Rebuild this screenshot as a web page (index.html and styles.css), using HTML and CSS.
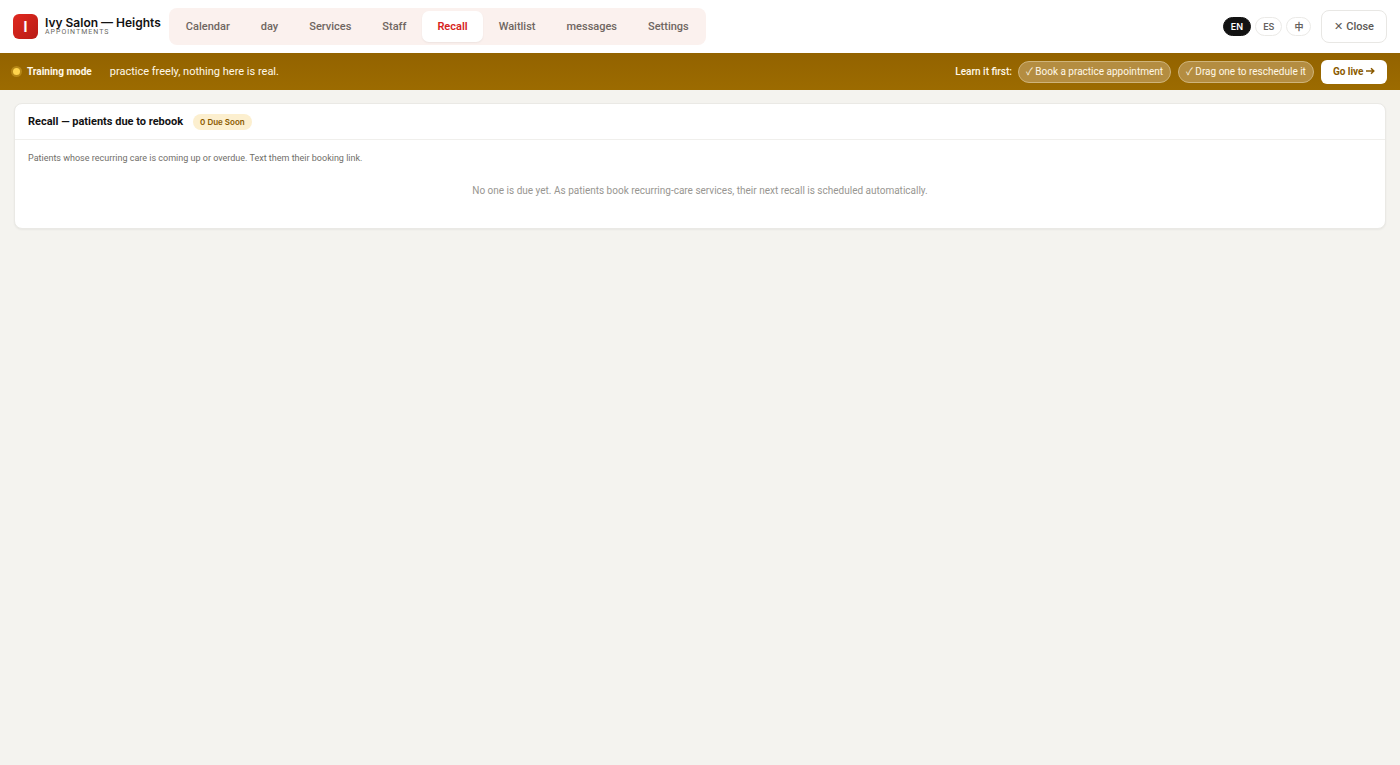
FILE: index.html
```html
<!DOCTYPE html>
<html lang="en">
<head>
  <meta charset="UTF-8">
  <meta name="viewport" content="width=device-width, initial-scale=1.0">
  <title>Ivy Salon — Heights</title>
  <link rel="stylesheet" href="styles.css">
</head>
<body>
  <header class="topbar">
    <div class="logo">I</div>
    <div class="brand">
      <div class="brand-name">Ivy Salon — Heights</div>
      <div class="brand-sub">APPOINTMENTS</div>
    </div>
    <nav class="tabs">
      <button class="tab">Calendar</button>
      <button class="tab">day</button>
      <button class="tab">Services</button>
      <button class="tab">Staff</button>
      <button class="tab active">Recall</button>
      <button class="tab">Waitlist</button>
      <button class="tab">messages</button>
      <button class="tab">Settings</button>
    </nav>
    <div class="langs">
      <button class="lang active">EN</button>
      <button class="lang">ES</button>
      <button class="lang">中</button>
    </div>
    <button class="close">✕ Close</button>
  </header>

  <div class="training">
    <span class="dot"></span>
    <b class="training-mode">Training mode</b>
    <span class="training-text">practice freely, nothing here is real.</span>
    <span class="learn">Learn it first:</span>
    <span class="step">✓ Book a practice appointment</span>
    <span class="step">✓ Drag one to reschedule it</span>
    <button class="golive">Go live <svg width="9" height="8" viewBox="0 0 9 8" aria-hidden="true"><path d="M0 4h7.5M5 1.2L7.8 4 5 6.8" fill="none" stroke="currentColor" stroke-width="1.5"/></svg></button>
  </div>

  <main>
    <section class="card">
      <div class="card-head">
        <h1>Recall — patients due to rebook</h1>
        <span class="badge">0 Due Soon</span>
      </div>
      <div class="card-body">
        <p class="hint">Patients whose recurring care is coming up or overdue. Text them their booking link.</p>
        <p class="empty">No one is due yet. As patients book recurring-care services, their next recall is scheduled automatically.</p>
      </div>
    </section>
  </main>
</body>
</html>
```

FILE: styles.css
```css
* {
  box-sizing: border-box;
}

body {
  margin: 0;
  background: #f4f3ef;
  color: #121212;
  font-family: Roboto, "Noto Sans CJK SC", sans-serif;
  font-size: 10px;
}

button {
  font-family: inherit;
  cursor: pointer;
  white-space: nowrap;
}

/* Top bar */
.topbar {
  display: flex;
  align-items: center;
  min-height: 53px;
  padding: 8px 13px;
  background: #fff;
}

.logo {
  width: 25px;
  height: 25px;
  margin-right: 7px;
  border-radius: 6px;
  background: linear-gradient(135deg, #e0281f, #b81c16);
  color: #fff;
  font: bold 14px/25px Inter, sans-serif;
  text-align: center;
}

.brand {
  margin-right: 8px;
  white-space: nowrap;
}

.brand-name {
  font: 600 12px/12px Inter, sans-serif;
}

.brand-sub {
  color: #6b6964;
  font-size: 7px;
  line-height: 7px;
  letter-spacing: 1px;
}

.tabs {
  display: flex;
  gap: 1px;
  padding: 3px 2px;
  border-radius: 8px;
  background: #fbf1ee;
}

.tab {
  height: 31px;
  padding: 0 15px;
  border: 0;
  border-radius: 7px;
  background: none;
  color: #6f6661;
  font-size: 11px;
  font-weight: 500;
}

.tab.active {
  background: #fff;
  color: #d6241d;
  font-weight: 600;
  box-shadow: 0 1px 2px rgba(0, 0, 0, 0.06);
}

.langs {
  display: flex;
  gap: 4px;
  margin-left: auto;
  margin-right: 10px;
}

.lang {
  height: 19px;
  padding: 0 7px;
  border: 1px solid #ebeae7;
  border-radius: 10px;
  background: #fff;
  color: #66635f;
  font-family: Inter, "Noto Sans CJK SC", sans-serif;
  font-size: 9px;
  font-weight: 600;
}

.lang.active {
  border-color: #121212;
  background: #121212;
  color: #fff;
}

.close {
  height: 33px;
  padding: 0 12px;
  border: 1px solid #e8e7e4;
  border-radius: 8px;
  background: #fff;
  color: #5c5955;
  font-size: 11px;
  font-weight: 500;
}

/* Training banner */
.training {
  display: flex;
  align-items: center;
  min-height: 37px;
  padding: 0 13px;
  background: linear-gradient(#936300, #9c6b00);
  color: #fff8e8;
  white-space: nowrap;
}

.dot {
  width: 7px;
  height: 7px;
  margin-right: 7px;
  border-radius: 50%;
  background: #ffd44d;
  box-shadow: 0 0 0 2px rgba(255, 212, 77, 0.3);
}

.training-mode {
  margin-right: 18px;
}

.training-text {
  font-size: 11px;
}

.learn {
  margin-left: auto;
  margin-right: 6px;
  font-weight: 500;
}

.step {
  margin-right: 7px;
  padding: 0 7px;
  border: 1px solid #cfb47b;
  border-radius: 11px;
  background: #b48d41;
  line-height: 20px;
}

.golive {
  height: 24px;
  padding: 0 12px;
  border: 0;
  border-radius: 6px;
  background: #fff;
  color: #8a5a00;
  font-size: 10px;
  font-weight: 700;
}

/* Recall card */
main {
  padding: 13px 14px;
}

.card {
  border: 1px solid #eae9e5;
  border-radius: 8px;
  background: #fff;
  box-shadow: 0 1px 2px rgba(0, 0, 0, 0.05);
}

.card-head {
  display: flex;
  align-items: center;
  gap: 10px;
  height: 36px;
  padding: 0 13px;
  border-bottom: 1px solid #f0efec;
}

h1 {
  margin: 0;
  font: 700 11px/16px Roboto, sans-serif;
}

.badge {
  padding: 0 7px;
  border-radius: 8px;
  background: #fcefcf;
  color: #8a5a00;
  font-family: Inter, sans-serif;
  font-size: 8px;
  font-weight: 600;
  line-height: 16px;
}

.card-body {
  padding: 12px 13px 30px;
}

.hint {
  margin: 0;
  color: #706e69;
  font-size: 9px;
  line-height: 12px;
}

.empty {
  margin: 20px 0 0;
  color: #989691;
  font-size: 10px;
  line-height: 14px;
  text-align: center;
}
```
